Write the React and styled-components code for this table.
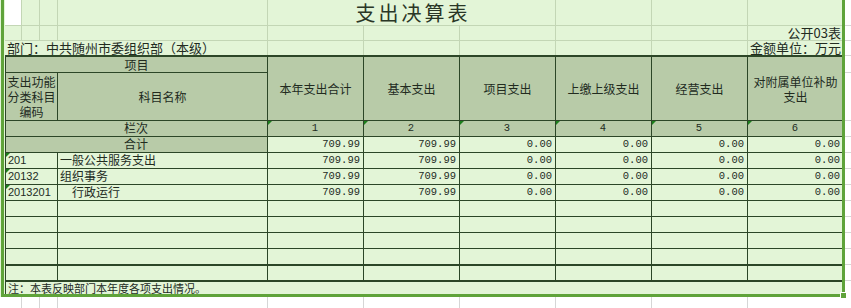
import React from 'react'
import styled, { createGlobalStyle, css } from 'styled-components'

const GREEN = '#e3f5d7'
const HEAD = '#b8cba8'
const DARK = '#2c4627'
const GRID = '#c3d6b5'
const PALE = '#d6d6d6'
const SELECT = '#5fa33a'
const TEXT = '#222b1f'

const GlobalStyle = createGlobalStyle`
  html, body {
    margin: 0;
    padding: 0;
    background: #fff;
  }
  body {
    font-family: "Noto Sans CJK SC", "Noto Sans", sans-serif;
    color: ${TEXT};
  }
`

const Viewport = styled.div`
  position: relative;
  width: 851px;
  height: 308px;
  overflow: hidden;
`

const Sheet = styled.div`
  display: grid;
  grid-template-columns: 5px 16px 18px 18px 210px repeat(6, 96px) 8px;
  grid-template-rows: 25px 15px 15px 17px 48px repeat(10, 16px) 17px 11px;
`

const Cell = styled.div`
  box-sizing: border-box;
  min-width: 0;
  display: flex;
  align-items: flex-end;
  justify-content: ${p => p.$h || 'flex-start'};
  grid-column: span ${p => p.$span || 1};
  grid-row: span ${p => p.$rows || 1};
  white-space: nowrap;
  font-size: 12px;
  line-height: 14px;
`

const Edge = styled.div`
  background: ${p => (p.$white ? '#fff' : GREEN)};
`

const Tail = styled.div`
  background: #fff;
  border-top: ${p => (p.$first ? 'none' : `1px solid ${PALE}`)};
`

const Blank = styled(Cell)`
  background: ${p => (p.$white ? '#fff' : GREEN)};
  border-left: ${p => (p.$open ? 'none' : `1px solid ${p.$white ? PALE : GRID}`)};
  border-top: ${p => (p.$first ? 'none' : `1px solid ${GRID}`)};
  padding: 0 2px;
  font-size: 13px;
  line-height: 14px;
`

const Head = styled(Cell)`
  background: ${HEAD};
  border-left: 1px solid ${DARK};
  border-top: ${p => (p.$thick ? 2 : 1)}px solid ${DARK};
  align-items: ${p => (p.$low ? 'flex-end' : 'center')};
  justify-content: center;
  text-align: center;
  white-space: normal;
  line-height: 15px;
`

const Data = styled(Cell)`
  position: relative;
  background: ${p => (p.$head ? HEAD : GREEN)};
  border-left: 1px solid ${DARK};
  border-top: ${p => (p.$thick ? 2 : 1)}px solid ${DARK};
  padding: 0 3px 1px 2px;

  ${p =>
    p.$flag &&
    css`
      &::before {
        content: '';
        position: absolute;
        left: 0;
        top: 0;
        border-style: solid;
        border-width: 4px 4px 0 0;
        border-color: #1c7f1c transparent transparent transparent;
      }
    `}
`

const Title = styled.span`
  font-size: 20px;
  line-height: 22px;
  letter-spacing: 3px;
  padding-left: 3px;
  padding-bottom: 1px;
  color: #2a3626;
`

const Num = styled.span`
  font-family: "Liberation Mono", "DejaVu Sans Mono", monospace;
  font-size: 10.5px;
  line-height: 13px;
`

const Code = styled.span`
  font-family: "Liberation Sans", Arial, sans-serif;
  font-size: 11px;
  line-height: 13px;
`

const Note = styled.span`
  font-size: 11px;
  line-height: 14px;
  padding-bottom: 1px;
`

const Selection = styled.div`
  position: absolute;
  left: 1px;
  top: -3px;
  width: 844px;
  height: 300px;
  box-sizing: border-box;
  border: 3px solid ${SELECT};
  pointer-events: none;
`

const Handle = styled.div`
  position: absolute;
  left: 840px;
  top: 292px;
  width: 7px;
  height: 7px;
  box-sizing: border-box;
  background: ${SELECT};
  border: 1px solid #fff;
`

const columns = [
  ['本年支出合计'],
  ['基本支出'],
  ['项目支出'],
  ['上缴上级支出'],
  ['经营支出'],
  ['对附属单位补助', '支出'],
]

const filled = [
  { code: '201', name: '一般公共服务支出' },
  { code: '20132', name: '组织事务' },
  { code: '2013201', name: '\u3000行政运行' },
].map(r => ({ ...r, vals: ['709.99', '709.99', '0.00', '0.00', '0.00', '0.00'] }))

const rows = [
  ...filled,
  ...Array.from({ length: 5 }, () => ({ code: '', name: '', vals: ['', '', '', '', '', ''] })),
]

const six = [0, 1, 2, 3, 4, 5]

const App = () => {
  return (
    <Viewport>
      <GlobalStyle />
      <Sheet>
        {/* row 1: title */}
        <Edge />
        <Blank $first $open $white />
        <Blank $first />
        <Blank $first />
        <Blank $first />
        <Blank $first $span={3} $h="center">
          <Title>支出决算表</Title>
        </Blank>
        <Blank $first />
        <Blank $first />
        <Blank $first />
        <Tail $first />

        {/* row 2 */}
        <Edge />
        <Blank $open />
        <Blank />
        <Blank />
        <Blank />
        {six.slice(0, 5).map(i => (
          <Blank key={i} />
        ))}
        <Blank $h="flex-end">公开03表</Blank>
        <Tail />

        {/* row 3 */}
        <Edge />
        <Blank $open $span={4}>
          部门：中共随州市委组织部（本级）
        </Blank>
        {six.slice(0, 5).map(i => (
          <Blank key={i} />
        ))}
        <Blank $h="flex-end">金额单位：万元</Blank>
        <Tail />

        {/* header */}
        <Edge />
        <Head $thick $low $span={4}>
          项目
        </Head>
        {columns.map((c, i) => (
          <Head key={i} $thick $rows={2}>
            <div>
              {c.map((line, j) => (
                <div key={j}>{line}</div>
              ))}
            </div>
          </Head>
        ))}
        <Tail />

        <Edge />
        <Head $span={3}>
          <div>
            支出功能
            <br />
            分类科目
            <br />
            编码
          </div>
        </Head>
        <Head>科目名称</Head>
        <Tail />

        {/* 栏次 */}
        <Edge />
        <Data $head $span={4} $h="center">
          栏次
        </Data>
        {six.map(i => (
          <Data key={i} $head $flag $h="center">
            <Num>{i + 1}</Num>
          </Data>
        ))}
        <Tail />

        {/* 合计 */}
        <Edge />
        <Data $head $span={4} $h="center">
          合计
        </Data>
        {six.map(i => (
          <Data key={i} $h="flex-end">
            <Num>{i < 2 ? '709.99' : '0.00'}</Num>
          </Data>
        ))}
        <Tail />

        {rows.map((r, idx) => {
          const thick = idx === rows.length - 1
          return (
            <React.Fragment key={idx}>
              <Edge />
              <Data $span={3} $flag={!!r.code} $thick={thick}>
                <Code>{r.code}</Code>
              </Data>
              <Data $thick={thick}>{r.name}</Data>
              {r.vals.map((v, i) => (
                <Data key={i} $h="flex-end" $thick={thick}>
                  <Num>{v}</Num>
                </Data>
              ))}
              <Tail />
            </React.Fragment>
          )
        })}

        {/* note */}
        <Edge />
        <Data $span={10} $thick>
          <Note>注：本表反映部门本年度各项支出情况。</Note>
        </Data>
        <Tail />

        {/* below the sheet */}
        <Edge $white />
        <Blank $first $open $white />
        <Blank $first $white />
        <Blank $first $white />
        <Blank $first $white />
        {six.map(i => (
          <Blank key={i} $first $white />
        ))}
        <Tail $first />
      </Sheet>
      <Selection />
      <Handle />
    </Viewport>
  )
}

export default App
